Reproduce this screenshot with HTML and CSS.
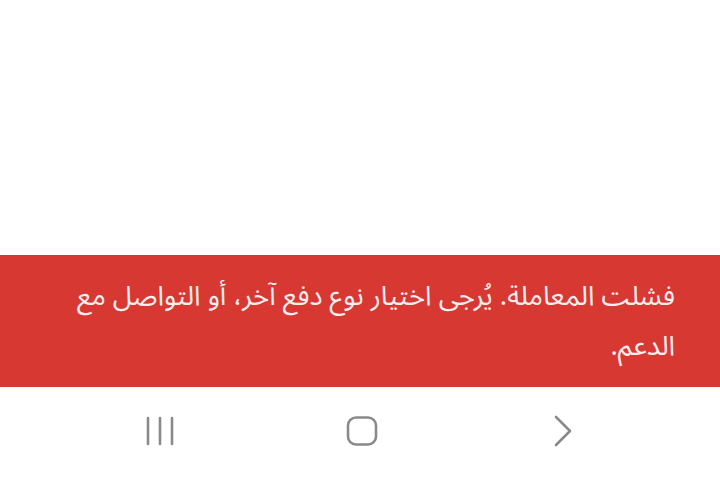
FILE: index.html
```html
<!DOCTYPE html>
<html lang="ar">
<head>
<meta charset="utf-8">
<link rel="stylesheet" href="styles.css">
</head>
<body>
<div class="screen">
  <div class="content"></div>
  <div class="banner" dir="rtl">
    <p class="message">فشلت المعاملة. يُرجى اختيار نوع دفع آخر، أو التواصل مع الدعم.</p>
  </div>
  <nav class="navbar">
    <div class="nav-item">
      <svg width="30" height="30" viewBox="0 0 30 30"><g stroke="#8a8a8a" stroke-width="2.6" stroke-linecap="round"><line x1="3" y1="2" x2="3" y2="28"/><line x1="15" y1="2" x2="15" y2="28"/><line x1="27" y1="2" x2="27" y2="28"/></g></svg>
    </div>
    <div class="nav-item">
      <svg width="32" height="32" viewBox="0 0 32 32"><rect x="2" y="2.5" width="28" height="27" rx="8" fill="none" stroke="#8a8a8a" stroke-width="2.6"/></svg>
    </div>
    <div class="nav-item">
      <svg width="20" height="32" viewBox="0 0 20 32"><polyline points="3,2 17,16 3,30" fill="none" stroke="#8a8a8a" stroke-width="2.6" stroke-linecap="round" stroke-linejoin="round"/></svg>
    </div>
  </nav>
</div>
</body>
</html>
```
FILE: styles.css
```css
html, body {
  margin: 0;
  padding: 0;
  background: #ffffff;
}
.screen {
  width: 720px;
  height: 477px;
  display: flex;
  flex-direction: column;
  overflow: hidden;
}
.content {
  height: 255px;
  background: #ffffff;
}
.banner {
  height: 132px;
  box-sizing: border-box;
  background: #d73832;
  padding: 16px 45px 0 45px;
}
.message {
  margin: 0;
  color: #fbeeee;
  font-family: "Noto Sans Arabic", "DejaVu Sans", "Noto Sans", sans-serif;
  font-size: 27.3px;
  line-height: 50px;
  text-align: right;
}
.navbar {
  flex: 1;
  display: flex;
  align-items: center;
  padding: 0 0 2px 0;
}
.nav-item {
  display: flex;
  justify-content: center;
  align-items: center;
}
.nav-item:nth-child(1) { width: 160px; margin-left: 80px; }
.nav-item:nth-child(2) { width: 160px; margin-left: 42px; }
.nav-item:nth-child(3) { width: 160px; margin-left: 41px; }
```
